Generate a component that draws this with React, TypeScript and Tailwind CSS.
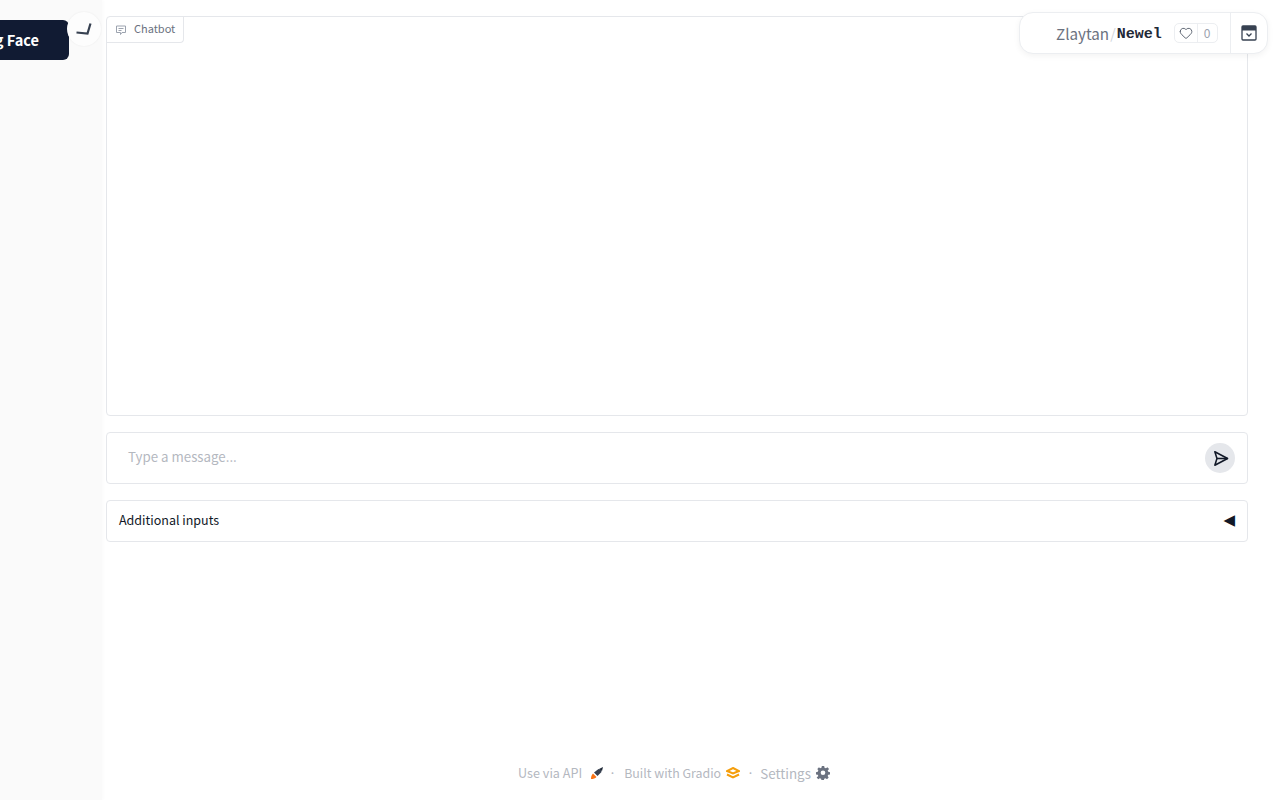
import React from 'react';
import { Heart } from 'lucide-react';

const font = 'font-["Noto_Sans_CJK_JP","Noto_Sans",sans-serif]';

const ChatIcon = () => (
  <svg width="12" height="12" viewBox="0 0 24 24" fill="none" stroke="#9ca3af" strokeWidth="2">
    <path d="M3 4h18v13h-7l-3 4v-4H3z" />
    <path d="M7 9h10M7 13h6" />
  </svg>
);

const SendIcon = () => (
  <svg width="17" height="17" viewBox="0 0 24 24" fill="none" stroke="#111827" strokeWidth="2.2" strokeLinejoin="round">
    <path d="M4 2.500 22 12 4 21.500 7 12z" />
    <path d="M7 12h15" />
  </svg>
);

const RocketIcon = () => (
  <svg width="14" height="14" viewBox="0 0 14 14">
    <path d="M1 13c0-2.500.5-4 2-5.500L6.500 11C5 12.500 3.500 13 1 13z" fill="#f97316" />
    <path d="M4 6.500 8.500 3l2.500.5.500 2.500L7.500 10z" fill="#374151" />
    <path d="M9 3l4-2-1 4z" fill="#1f2937" />
  </svg>
);

const GradioLogo = () => (
  <svg width="14" height="12" viewBox="0 0 14 12" fill="none" stroke="#f59e0b" strokeWidth="2">
    <path d="M7 1 13 4 7 6.500 1 4z" />
    <path d="M1 7.500 7 10.500l6-3" />
  </svg>
);

const GearIcon = () => (
  <svg width="14" height="14" viewBox="0 0 24 24" fill="#6b7280">
    <path fillRule="evenodd" d="M10 1h4l.6 3 2.400 1 2.600-1.700 2.800 2.800L20 8.700l1 2.300 3 .6v3.800l-3 .6-1 2.300 1.700 2.600-2.800 2.800-2.600-1.700-2.300 1-.6 3h-4l-.6-3-2.400-1-2.500 1.700-2.800-2.800L4 18.300l-1-2.300-3-.6v-3.800l3-.6 1-2.300-1.700-2.600 2.800-2.800L7 5l2.400-1zM12 8.500a4 4 0 1 0 0 8 4 4 0 0 0 0-8z" transform="translate(0 -1)" />
  </svg>
);

const SpaceHeader = () => (
  <div className="absolute right-[12px] top-[12px] flex h-[42px] w-[249px] items-center rounded-[14px] border border-[#eceef1] bg-white shadow-[0_2px_6px_rgba(0,0,0,0.05)]">
    <div className="flex flex-1 items-center pl-[36px]">
      <span className={`${font} text-[15.200px] leading-[20px] text-[#6b7280]`}>Zlaytan</span>
      <span className="mx-[1px] text-[14px] leading-[20px] text-[#d1d5db]">/</span>
      <span className="mt-[3px] font-['Liberation_Mono',monospace] text-[15px] leading-[20px] font-bold text-[#1f2937]">Newel</span>
      <div className="ml-[12px] flex h-[20px] items-center rounded-[5px] border border-[#eceef1]">
        <span className="flex h-full w-[23px] items-center justify-center border-r border-[#eceef1]">
          <Heart size={14} strokeWidth={1.5} color="#4b5563" />
        </span>
        <span className="w-[19px] text-center text-[12px] leading-[18px] text-[#9ca3af]">0</span>
      </div>
    </div>
    <div className="flex h-full w-[37px] items-center justify-center border-l border-[#eceef1]">
      <svg width="16" height="16" viewBox="0 0 16 16">
        <rect x="1" y="1" width="14" height="14" rx="1" fill="#fff" stroke="#374151" strokeWidth="1.300" />
        <rect x="1" y="1" width="14" height="4.500" fill="#374151" />
        <path d="M5.500 8.500 8 11l2.500-2.500" fill="none" stroke="#374151" strokeWidth="1.300" />
      </svg>
    </div>
  </div>
);

export default function App() {
  return (
    <div className={`${font} relative flex h-[800px] w-[1280px] overflow-hidden bg-white`}>
      {/* collapsed sidebar */}
      <aside className="relative h-full w-[102px] shrink-0 bg-[#fafafa] shadow-[2px_0_3px_rgba(0,0,0,0.015)]">
        <div className="absolute right-[33px] top-[20px] flex h-[40px] w-[120px] items-center justify-end rounded-r-[6px] bg-[#111b33] pr-[30px] text-[14.600px] leading-[20px] font-bold whitespace-nowrap text-white">
          Hugging Face
        </div>
        <div className="absolute left-[67px] top-[12px] flex h-[34px] w-[34px] items-center justify-center rounded-full bg-[#fdfdfd] shadow-[0_0_2px_rgba(0,0,0,0.07)]">
          <svg className="ml-[2px]" width="18" height="14" viewBox="0 0 18 14" fill="none" stroke="#374151" strokeWidth="2.200">
            <path d="M0.500 10.500 11.500 11.500 14.500 1.500" />
          </svg>
        </div>
      </aside>

      <main className="flex min-w-0 flex-1 flex-col pt-[16px] pl-[4px] pr-[32px]">
        <div className="relative h-[400px] rounded-[4px] border border-[#e5e7eb]">
          <div className="flex h-[26px] w-[77px] items-center gap-[7px] rounded-br-[4px] border-r border-b border-[#e5e7eb] pl-[8px] text-[11px] leading-[16px] text-[#6b7280]">
            <ChatIcon />
            <span className="-mt-[3px]">Chatbot</span>
          </div>
        </div>

        <div className="mt-[16px] flex h-[52px] items-center justify-between rounded-[4px] border border-[#e5e7eb] pl-[21px] pr-[12px]">
          <span className="-mt-[2px] text-[13.300px] leading-[20px] text-[#b4b8bf]">Type a message...</span>
          <span className="flex h-[30px] w-[30px] items-center justify-center rounded-full bg-[#e5e7eb]">
            <SendIcon />
          </span>
        </div>

        <div className="mt-[16px] flex h-[42px] items-center justify-between rounded-[4px] border border-[#e5e7eb] pl-[12px] pr-[12px]">
          <span className="-mt-[2px] text-[12.500px] leading-[20px] text-[#111827]">Additional inputs</span>
          <span className="-mt-[2px] font-['DejaVu_Sans',sans-serif] text-[15px] leading-[20px] text-[#111827]">◀</span>
        </div>

        <footer className="mt-[221px] flex h-[20px] items-center justify-center pr-[6px] text-[12.600px] leading-[20px] text-[#b4b8bf]">
          <span className="flex items-center gap-[8px]">Use via API <RocketIcon /></span>
          <span className="ml-[5px] mr-[8px]">·</span>
          <span className="flex items-center gap-[5px] text-[12.400px]">Built with Gradio <GradioLogo /></span>
          <span className="ml-[7px] mr-[6px]">·</span>
          <span className="flex items-center gap-[5px] text-[13.400px]">Settings <GearIcon /></span>
        </footer>
      </main>

      <SpaceHeader />
    </div>
  );
}
